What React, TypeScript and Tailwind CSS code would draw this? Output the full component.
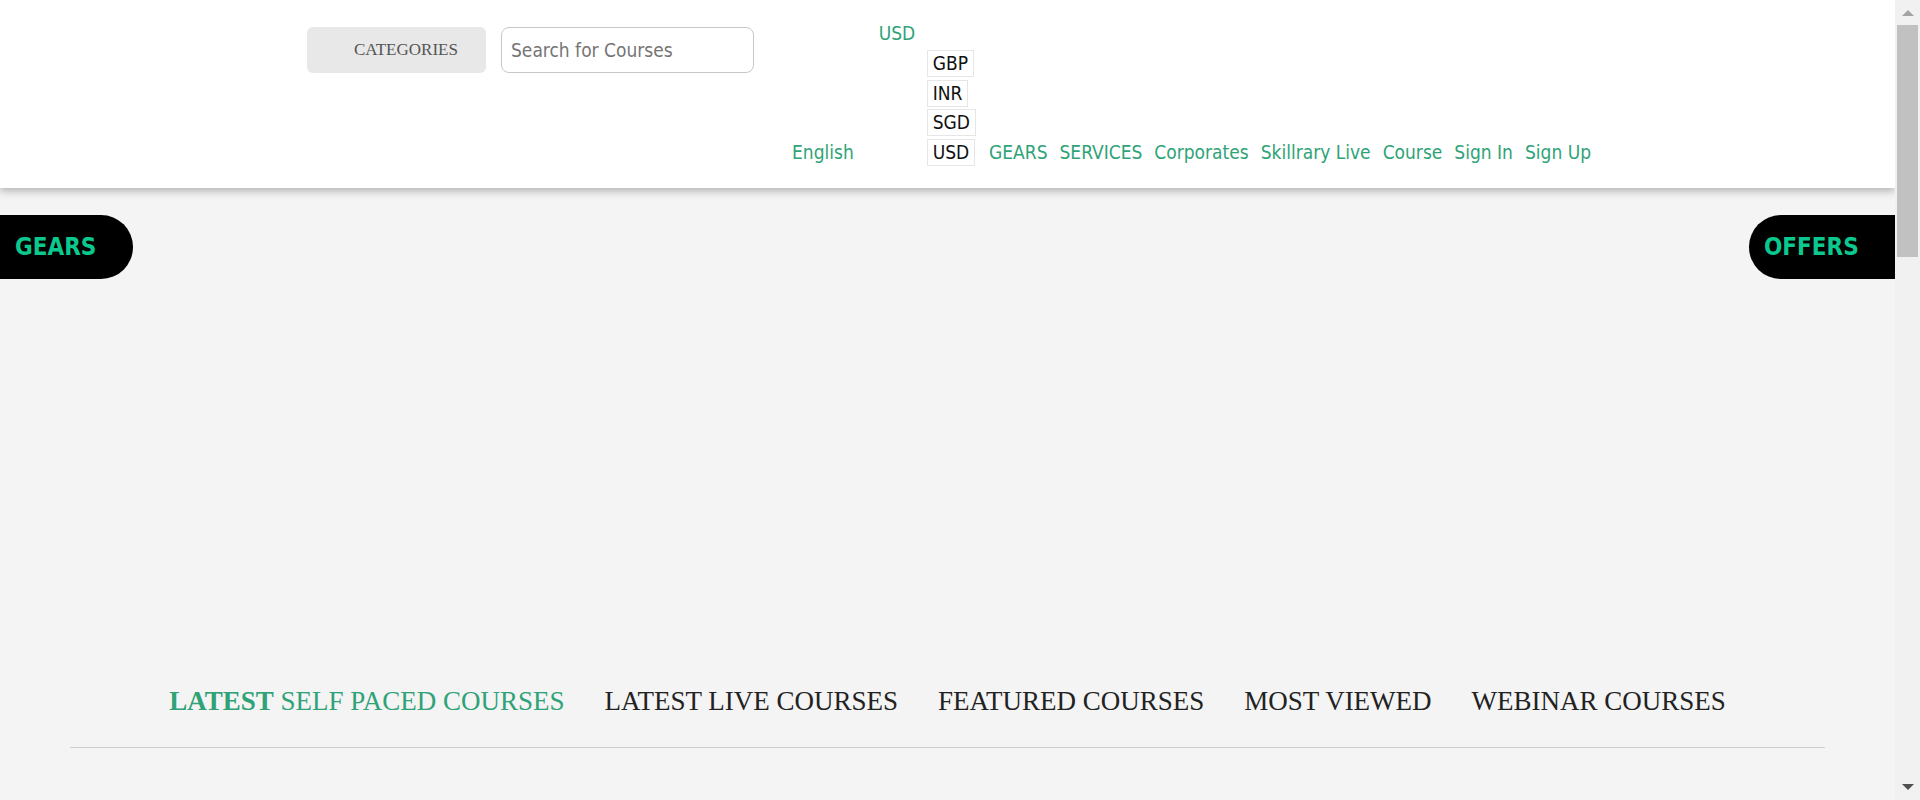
import { useState } from "react";

const navLinks = ["GEARS", "SERVICES", "Corporates", "Skillrary Live", "Course", "Sign In", "Sign Up"];
const currencies = ["GBP", "INR", "SGD", "USD"];
const tabs = ["LATEST LIVE COURSES", "FEATURED COURSES", "MOST VIEWED", "WEBINAR COURSES"];

const sans = "font-['DejaVu_Sans_Condensed','DejaVu_Sans',sans-serif] font-stretch-condensed";

function Scrollbar() {
    return (
        <div className="flex h-screen w-[25px] shrink-0 flex-col items-center bg-[#f1f1f1]">
            <div className="mt-[10px] h-0 w-0 border-x-[6px] border-b-[6px] border-x-transparent border-b-[#a3a3a3]" />
            <div className="mt-[9px] h-[232px] w-[21px] bg-[#c1c1c1]" />
            <div className="mb-[10px] mt-auto h-0 w-0 border-x-[6px] border-t-[6px] border-x-transparent border-t-[#505050]" />
        </div>
    );
}

export default function App() {
    const [currency] = useState("USD");

    return (
        <div className="flex h-screen overflow-hidden">
            <div className="min-w-0 flex-1 overflow-hidden bg-[#f4f4f4]">
                <header className={`relative z-10 flex h-[188px] items-start bg-white shadow-[0_3px_8px_rgba(0,0,0,0.28)] ${sans}`}>
                    <button className="ml-[307px] mt-[27px] h-[46px] w-[179px] rounded-[6px] bg-[#e8e8e8] pl-[47px] text-left font-['Liberation_Serif',serif] text-[17px] text-[#555]">
                        CATEGORIES
                    </button>
                    <input
                        className="ml-[15px] mt-[27px] h-[46px] w-[253px] rounded-[8px] border border-[#c8c8c8] bg-white px-[9px] text-[19px] text-[#333] outline-none placeholder:text-[#757575]"
                        placeholder="Search for Courses"
                    />
                    <nav className="ml-[38px] mt-[22px] flex items-end text-[19px] leading-[22px] text-[#2fa377]">
                        <a className="mb-[3px]">English</a>
                        <div className="ml-[25px] flex flex-col items-start">
                            <a>{currency}</a>
                            <ul className="ml-[48px] mt-[6px] flex flex-col gap-[2.5px] text-[#111]">
                                {currencies.map((c) => (
                                    <li key={c} className="w-fit border border-[#e6e6e6] bg-white px-[5px] py-[2px] leading-[21px]">
                                        {c}
                                    </li>
                                ))}
                            </ul>
                        </div>
                        <ul className="mb-[3px] ml-[13px] flex gap-[12px]">
                            {navLinks.map((l) => (
                                <li key={l}>
                                    <a>{l}</a>
                                </li>
                            ))}
                        </ul>
                    </nav>
                </header>

                <main>
                    <div className={`mt-[27px] flex justify-between ${sans}`}>
                        <div className="flex h-[64px] w-[133px] items-center rounded-r-full bg-black pl-[15px] text-[24px] font-bold text-[#0bc88e]">
                            GEARS
                        </div>
                        <div className="flex h-[64px] w-[146px] items-center rounded-l-full bg-black pl-[15px] text-[24px] font-bold text-[#0bc88e]">
                            OFFERS
                        </div>
                    </div>

                    <ul className="mx-[70px] mt-[407px] flex justify-center gap-[40px] border-b border-[#d0d0d0] pb-[31px] font-['Liberation_Serif',serif] text-[27px] leading-[30px] text-[#222]">
                        <li className="text-[#2fa377]">
                            <span className="font-bold">LATEST</span> SELF PACED COURSES
                        </li>
                        {tabs.map((t) => (
                            <li key={t}>{t}</li>
                        ))}
                    </ul>
                </main>
            </div>
            <Scrollbar />
        </div>
    );
}
